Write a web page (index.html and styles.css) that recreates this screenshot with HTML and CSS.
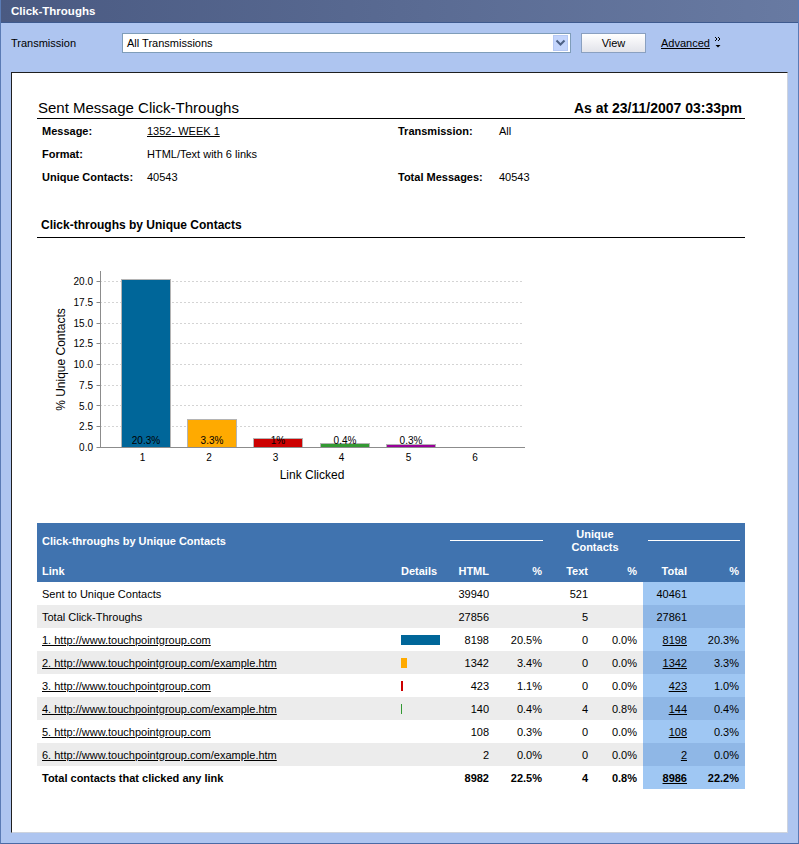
FILE: index.html
```html
<!DOCTYPE html>
<html>
<head>
<meta charset="utf-8">
<title>Click-Throughs</title>
<link rel="stylesheet" href="styles.css">
</head>
<body>
<div class="window">
  <div class="titlebar">Click-Throughs</div>
  <div class="toolbar">
    <span class="tb-label">Transmission</span>
    <div class="select">
      <span class="select-text">All Transmissions</span>
      <span class="select-btn"><svg width="11" height="8" viewBox="0 0 11 8"><polyline points="1.5,1.5 5.5,5.5 9.5,1.5" fill="none" stroke="#4d6185" stroke-width="2"/></svg></span>
    </div>
    <button class="btn">View</button>
    <a class="adv" href="#">Advanced</a>
    <svg class="adv-icon" width="8" height="14" viewBox="0 0 8 14"><polyline points="1,1 3,3 1,5" fill="none" stroke="#000" stroke-width="1"/><polyline points="4,1 6,3 4,5" fill="none" stroke="#000" stroke-width="1"/><polygon points="1.5,9 6.5,9 4,11.5" fill="#000"/></svg>
  </div>
  <div class="panel">
    <div class="content">
      <div class="report-head">
        <h1>Sent Message Click-Throughs</h1>
        <div class="asat">As at 23/11/2007 03:33pm</div>
      </div>
      <div class="info">
        <span class="lbl">Message:</span><span><a href="#" class="lnk">1352- WEEK 1</a></span>
        <span class="lbl">Transmission:</span><span>All</span>
        <span class="lbl">Format:</span><span>HTML/Text with 6 links</span>
        <span></span><span></span>
        <span class="lbl">Unique Contacts:</span><span>40543</span>
        <span class="lbl">Total Messages:</span><span>40543</span>
      </div>
      <h2 class="section">Click-throughs by Unique Contacts</h2>
      <svg class="chart" width="500" height="260" viewBox="0 0 500 260">
        <g class="grid">
          <line x1="63" y1="43.5" x2="486" y2="43.5"/>
          <line x1="63" y1="64.5" x2="486" y2="64.5"/>
          <line x1="63" y1="85.5" x2="486" y2="85.5"/>
          <line x1="63" y1="105.5" x2="486" y2="105.5"/>
          <line x1="63" y1="126.5" x2="486" y2="126.5"/>
          <line x1="63" y1="147.5" x2="486" y2="147.5"/>
          <line x1="63" y1="167.5" x2="486" y2="167.5"/>
          <line x1="63" y1="188.5" x2="486" y2="188.5"/>
        </g>
        <g class="ticks">
          <line x1="59.5" y1="43.5" x2="63" y2="43.5"/>
          <line x1="59.5" y1="64.5" x2="63" y2="64.5"/>
          <line x1="59.5" y1="85.5" x2="63" y2="85.5"/>
          <line x1="59.5" y1="105.5" x2="63" y2="105.5"/>
          <line x1="59.5" y1="126.5" x2="63" y2="126.5"/>
          <line x1="59.5" y1="147.5" x2="63" y2="147.5"/>
          <line x1="59.5" y1="167.5" x2="63" y2="167.5"/>
          <line x1="59.5" y1="188.5" x2="63" y2="188.5"/>
          <line x1="59.5" y1="209.5" x2="63" y2="209.5"/>
        </g>
        <g class="ylabels">
          <text x="56" y="47.2">20.0</text>
          <text x="56" y="68">17.5</text>
          <text x="56" y="88.8">15.0</text>
          <text x="56" y="109.4">12.5</text>
          <text x="56" y="130.2">10.0</text>
          <text x="56" y="150.9">7.5</text>
          <text x="56" y="171.5">5.0</text>
          <text x="56" y="192.2">2.5</text>
          <text x="56" y="213">0.0</text>
        </g>
        <g class="bars">
          <rect class="b1" x="84.5" y="41.5" width="49" height="168"/>
          <rect class="b2" x="150.5" y="181.5" width="49" height="28"/>
          <rect class="b3" x="216.5" y="200.5" width="49" height="9"/>
          <rect class="b4" x="283.5" y="205.5" width="49" height="4"/>
          <rect class="b5" x="349.5" y="206.5" width="49" height="3"/>
        </g>
        <line class="axis" x1="63.5" y1="33" x2="63.5" y2="210"/>
        <line class="axis" x1="63" y1="209.5" x2="488" y2="209.5"/>
        <g class="vlabels">
          <text x="109" y="205.7">20.3%</text>
          <text x="175" y="205.7">3.3%</text>
          <text x="241" y="205.7">1%</text>
          <text x="308" y="205.7">0.4%</text>
          <text x="374" y="205.7">0.3%</text>
        </g>
        <g class="xlabels">
          <text x="105.5" y="223">1</text>
          <text x="172" y="223">2</text>
          <text x="238.5" y="223">3</text>
          <text x="304.5" y="223">4</text>
          <text x="371.5" y="223">5</text>
          <text x="438" y="223">6</text>
        </g>
        <text class="axis-title" transform="translate(27.5,121.5) rotate(-90)">% Unique Contacts</text>
        <text class="axis-title" x="275" y="240.5">Link Clicked</text>
      </svg>
      <table class="ct">
        <colgroup>
          <col class="w-link"><col class="w-det"><col class="w-html"><col class="w-hp"><col class="w-text"><col class="w-tp"><col class="w-tot"><col class="w-totp">
        </colgroup>
        <thead>
          <tr class="hr1">
            <th colspan="2" class="l">Click-throughs by Unique Contacts</th>
            <th colspan="2"><div class="hline hl-a"></div></th>
            <th colspan="2" class="c uc">Unique<br>Contacts</th>
            <th colspan="2"><div class="hline hl-b"></div></th>
          </tr>
          <tr class="hr2">
            <th class="l">Link</th>
            <th class="d">Details</th>
            <th class="r">HTML</th>
            <th class="r">%</th>
            <th class="r">Text</th>
            <th class="r r6">%</th>
            <th class="r">Total</th>
            <th class="r r6">%</th>
          </tr>
        </thead>
        <tbody>
          <tr>
            <td class="l">Sent to Unique Contacts</td><td></td>
            <td class="r">39940</td><td class="r"></td>
            <td class="r">521</td><td class="r r6"></td>
            <td class="r tot">40461</td><td class="r r6 tot"></td>
          </tr>
          <tr class="alt">
            <td class="l">Total Click-Throughs</td><td></td>
            <td class="r">27856</td><td class="r"></td>
            <td class="r">5</td><td class="r r6"></td>
            <td class="r tot">27861</td><td class="r r6 tot"></td>
          </tr>
          <tr>
            <td class="l"><a href="#" class="lnk">1. http://www.touchpointgroup.com</a></td>
            <td class="d"><div class="bar c1" style="width:39px"></div></td>
            <td class="r">8198</td><td class="r">20.5%</td>
            <td class="r">0</td><td class="r r6">0.0%</td>
            <td class="r tot"><a href="#" class="lnk">8198</a></td><td class="r r6 tot">20.3%</td>
          </tr>
          <tr class="alt">
            <td class="l"><a href="#" class="lnk">2. http://www.touchpointgroup.com/example.htm</a></td>
            <td class="d"><div class="bar c2" style="width:6px"></div></td>
            <td class="r">1342</td><td class="r">3.4%</td>
            <td class="r">0</td><td class="r r6">0.0%</td>
            <td class="r tot"><a href="#" class="lnk">1342</a></td><td class="r r6 tot">3.3%</td>
          </tr>
          <tr>
            <td class="l"><a href="#" class="lnk">3. http://www.touchpointgroup.com</a></td>
            <td class="d"><div class="bar c3" style="width:2px"></div></td>
            <td class="r">423</td><td class="r">1.1%</td>
            <td class="r">0</td><td class="r r6">0.0%</td>
            <td class="r tot"><a href="#" class="lnk">423</a></td><td class="r r6 tot">1.0%</td>
          </tr>
          <tr class="alt">
            <td class="l"><a href="#" class="lnk">4. http://www.touchpointgroup.com/example.htm</a></td>
            <td class="d"><div class="bar c4" style="width:1px"></div></td>
            <td class="r">140</td><td class="r">0.4%</td>
            <td class="r">4</td><td class="r r6">0.8%</td>
            <td class="r tot"><a href="#" class="lnk">144</a></td><td class="r r6 tot">0.4%</td>
          </tr>
          <tr>
            <td class="l"><a href="#" class="lnk">5. http://www.touchpointgroup.com</a></td>
            <td class="d"></td>
            <td class="r">108</td><td class="r">0.3%</td>
            <td class="r">0</td><td class="r r6">0.0%</td>
            <td class="r tot"><a href="#" class="lnk">108</a></td><td class="r r6 tot">0.3%</td>
          </tr>
          <tr class="alt">
            <td class="l"><a href="#" class="lnk">6. http://www.touchpointgroup.com/example.htm</a></td>
            <td class="d"></td>
            <td class="r">2</td><td class="r">0.0%</td>
            <td class="r">0</td><td class="r r6">0.0%</td>
            <td class="r tot"><a href="#" class="lnk">2</a></td><td class="r r6 tot">0.0%</td>
          </tr>
          <tr class="totals">
            <td class="l">Total contacts that clicked any link</td><td></td>
            <td class="r">8982</td><td class="r">22.5%</td>
            <td class="r">4</td><td class="r r6">0.8%</td>
            <td class="r tot"><a href="#" class="lnk">8986</a></td><td class="r r6 tot">22.2%</td>
          </tr>
        </tbody>
      </table>
    </div>
  </div>
</div>
</body>
</html>
```
FILE: styles.css
```css
* { box-sizing: border-box; }
html, body { margin: 0; padding: 0; }
body {
  font-family: "Liberation Sans", Arial, sans-serif;
  font-size: 11px;
  color: #000;
  background: #aec5f0;
}
.window {
  width: 799px;
  height: 844px;
  background: #aec5f0;
  border-left: 1px solid #5a7bb5;
  border-right: 1px solid #5a7bb5;
  border-bottom: 1px solid #4a6aa5;
}
.titlebar {
  height: 23px;
  background: linear-gradient(to right, #4a5a82, #687aa2);
  border-bottom: 1px solid #3e5a8e;
  color: #fff;
  font-weight: bold;
  font-size: 11.5px;
  line-height: 22px;
  padding-left: 10px;
}
.toolbar {
  display: flex;
  align-items: center;
  height: 20px;
  margin-top: 10px;
  padding-left: 10px;
}
.tb-label { width: 111px; }
.select {
  width: 449px;
  height: 20px;
  border: 1px solid #7f9db9;
  background: #fff;
  display: flex;
  align-items: center;
  justify-content: space-between;
  padding-left: 4px;
  padding-right: 2px;
}
.select-btn {
  width: 15px;
  height: 16px;
  background: #c4d5fc;
  border: 1px solid #b5c8f4;
  display: flex;
  align-items: center;
  justify-content: center;
}
.select-btn svg { display: block; }
.btn {
  margin-left: 10px;
  width: 65px;
  height: 20px;
  border: 1px solid #8aa0c0;
  background: linear-gradient(#ffffff, #e2e3ea);
  font: inherit;
  color: #000;
  padding: 0;
}
.adv {
  margin-left: 15px;
  color: #000;
  text-decoration: underline;
}
.adv-icon { margin-left: 4px; display: block; }
.panel {
  margin: 19px 10px 0 10px;
  height: 761px;
  background: #fff;
  border-top: 1px solid #1f1f1f;
  border-left: 1px solid #1f1f1f;
  border-right: 1px solid #cdd3de;
  border-bottom: 1px solid #cdd3de;
  padding: 25px 0 0 25px;
}
.content { width: 708px; }
.report-head {
  display: flex;
  justify-content: space-between;
  height: 21px;
  border-bottom: 1px solid #000;
  line-height: 20px;
}
.report-head h1 {
  margin: 0;
  font-size: 15px;
  font-weight: normal;
  padding-left: 1px;
}
.asat {
  font-size: 14px;
  font-weight: bold;
  padding-right: 3px;
}
.info {
  display: grid;
  grid-template-columns: 105px 251px 101px 1fr;
  grid-auto-rows: 23px;
  align-items: center;
  padding-left: 5px;
}
.lbl { font-weight: bold; }
.lnk { color: #000; text-decoration: underline; }
.section {
  margin: 26px 0 0 0;
  height: 24px;
  border-bottom: 1px solid #000;
  font-size: 12px;
  font-weight: bold;
  line-height: 23px;
  padding-left: 4px;
}
.chart { display: block; }
.chart text { font-family: "Liberation Sans", Arial, sans-serif; font-size: 10px; fill: #000; }
.chart .grid line { stroke: #d4d4d4; stroke-width: 1; stroke-dasharray: 2 2; }
.chart .ticks line { stroke: #888; stroke-width: 1; }
.chart .axis { stroke: #8c8c8c; stroke-width: 1; }
.chart .ylabels text { text-anchor: end; }
.chart .vlabels text, .chart .xlabels text { text-anchor: middle; }
.chart .axis-title { font-size: 12px; text-anchor: middle; }
.chart .bars rect { stroke: #b4b4b4; stroke-width: 1; }
.chart .b1 { fill: #006699; }
.chart .b2 { fill: #ffaa00; }
.chart .b3 { fill: #cc0000; }
.chart .b4 { fill: #339933; }
.chart .b5 { fill: #990099; }

.ct {
  margin-top: 25px;
  width: 708px;
  table-layout: fixed;
  border-collapse: collapse;
  border-spacing: 0;
}
.w-link { width: 361px; }
.w-det { width: 48px; }
.w-html { width: 48px; }
.w-hp { width: 53px; }
.w-text { width: 46px; }
.w-tp { width: 50px; }
.w-tot { width: 49px; }
.w-totp { width: 53px; }
.ct th, .ct td {
  padding: 0;
  height: 23px;
  vertical-align: middle;
  white-space: nowrap;
}
.ct thead th {
  background: #4073af;
  color: #fff;
  font-weight: bold;
}
.ct .hr1 th { height: 36px; }
.ct .l { text-align: left; padding-left: 5px; }
.ct .d { text-align: left; padding-left: 3px; }
.ct .r { text-align: right; padding-right: 5px; }
.ct .r6 { padding-right: 6px; }
.ct .c { text-align: center; }
.ct .uc { line-height: 13px; }
.hline { height: 1px; background: #fff; margin-top: -1px; }
.hl-a { margin-left: 4px; margin-right: 4px; }
.hl-b { margin-left: 5px; margin-right: 5px; }
.ct tbody tr { background: #fff; }
.ct tbody tr.alt { background: #ececec; }
.ct tbody td.tot { background: #9fc7f3; }
.ct tbody tr.alt td.tot { background: #8fb7e6; }
.ct .totals td { font-weight: bold; }
.bar { display: block; height: 10px; }
.c1 { background: #006699; }
.c2 { background: #ffaa00; }
.c3 { background: #cc0000; }
.c4 { background: #339933; }
```
